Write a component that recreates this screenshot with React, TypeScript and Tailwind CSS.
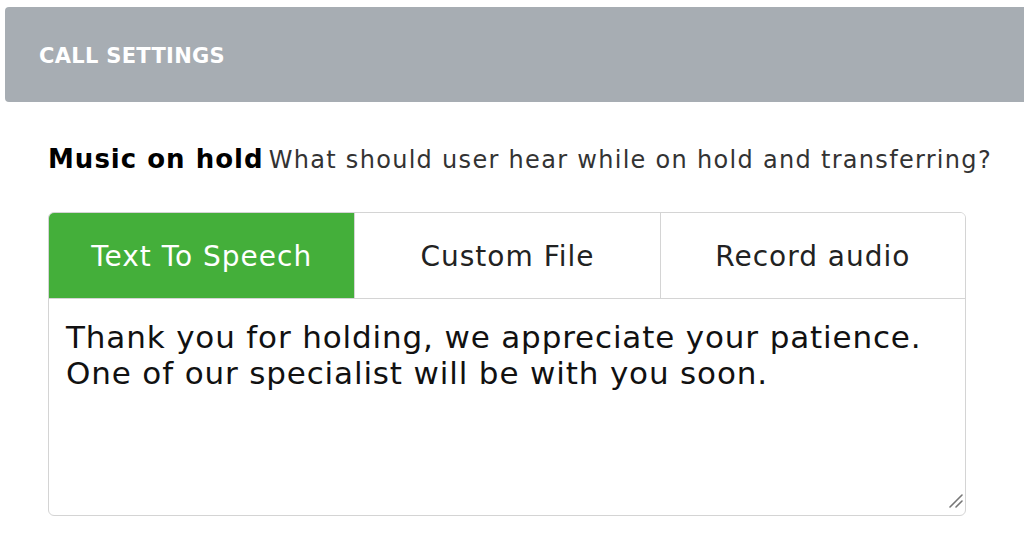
import { useEffect, useRef, useState } from "react";

const tabs = ["Text To Speech", "Custom File", "Record audio"];

function App() {
  const [active, setActive] = useState(0);
  const [text, setText] = useState(
    "Thank you for holding, we appreciate your patience.\nOne of our specialist will be with you soon."
  );
  const areaRef = useRef<HTMLTextAreaElement>(null);

  useEffect(() => {
    const el = areaRef.current;
    if (el) {
      el.focus();
      el.setSelectionRange(el.value.length, el.value.length);
    }
  }, []);

  return (
    <div className="h-[547px] w-full overflow-hidden bg-white font-['DejaVu_Sans',sans-serif]">
      <div className="ml-[5px] mt-[7px] flex h-[95px] items-center rounded-l-[4px] bg-[#a7adb3] pl-[34px] pt-[4px]">
        <h1 className="text-[21px] font-bold tracking-[0.3px] text-white">CALL SETTINGS</h1>
      </div>

      <div className="pl-[48px] pr-[58px]">
        <p className="mt-[42px] whitespace-nowrap leading-[30px]">
          <span className="text-[26px] font-bold tracking-[1px] text-black">Music on hold</span>{" "}
          <span className="text-[24px] tracking-[1.3px] text-[#333]">
            What should user hear while on hold and transferring?
          </span>
        </p>

        <div className="relative mt-[34px] flex h-[304px] flex-col overflow-hidden rounded-[6px] border border-[#d4d4d4]">
          <div className="grid h-[86px] shrink-0 grid-cols-3 border-b border-[#d4d4d4]">
            {tabs.map((t, i) => (
              <button
                key={t}
                onClick={() => setActive(i)}
                className={
                  i === active
                    ? "flex items-center justify-center bg-[#44af3a] pt-[3px] text-[28px] tracking-[1px] text-white"
                    : "flex items-center justify-center border-l border-[#d4d4d4] bg-white pt-[3px] text-[28px] tracking-[1px] text-[#222]"
                }
              >
                {t}
              </button>
            ))}
          </div>
          <textarea
            ref={areaRef}
            value={text}
            onChange={(e) => setText(e.target.value)}
            className="flex-1 resize-none px-[17px] pt-[20px] text-[31px] leading-[36px] tracking-[0.85px] text-[#111] caret-[#111] outline-none"
          />
          <svg
            className="pointer-events-none absolute bottom-[7px] right-[2px]"
            width="14"
            height="14"
            viewBox="0 0 14 14"
          >
            <path d="M1 13 L13 1 M7 13 L13 7" stroke="#777" strokeWidth="1.6" strokeLinecap="round" />
          </svg>
        </div>
      </div>
    </div>
  );
}

export default App;
